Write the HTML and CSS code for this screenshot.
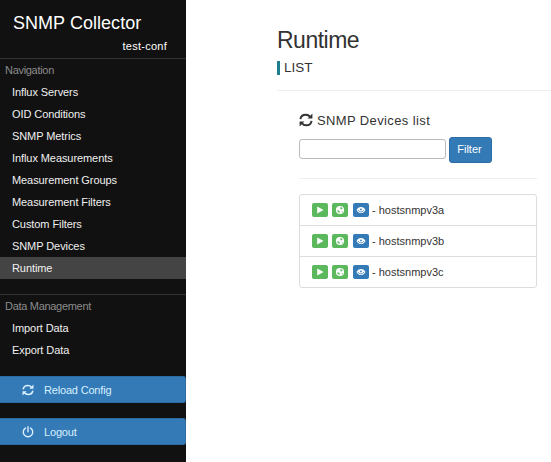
FILE: index.html
```html
<!DOCTYPE html>
<html lang="en">
<head>
<meta charset="utf-8">
<title>SNMP Collector</title>
<link rel="stylesheet" href="styles.css">
</head>
<body>
<svg class="defs" width="0" height="0" aria-hidden="true">
  <symbol id="refresh" viewBox="0 0 14 14">
    <path d="M1.4 6.2C1.8 3.2 4.2 1.7 6.8 1.7c1.8 0 3.2.7 4.2 2M12.6 7.8c-.4 3-2.8 4.5-5.4 4.5-1.8 0-3.2-.7-4.2-2" fill="none" stroke="currentColor" stroke-width="1.9"/>
    <path d="M13.4.6v5H8.6zM.6 13.4v-5h4.8z" fill="currentColor"/>
  </symbol>
  <symbol id="power" viewBox="0 0 14 14">
    <path d="M4 2.4a5.5 5.5 0 1 0 6 0M7 .8v6" fill="none" stroke="currentColor" stroke-width="1.6" stroke-linecap="round"/>
  </symbol>
  <symbol id="play" viewBox="0 0 10 10"><path d="M2.2 1.6v7L8.6 5.1z" fill="currentColor"/></symbol>
  <symbol id="globe" viewBox="0 0 10 10">
    <circle cx="5" cy="5" r="4.1" fill="currentColor"/>
    <path d="M5.2 2.2l1.8.4.5 1.2-1 .6-1.2-.8zM2 5.2l1.6.4 1.2.9-.5 1.4-1.5-.9zM6.7 6.6l1.2-.3-.7 1.4z" fill="#5cb85c"/>
  </symbol>
  <symbol id="eye" viewBox="0 0 10 10">
    <path d="M.5 5C2.2.9 7.8.9 9.5 5 7.8 9.1 2.2 9.1.5 5z" fill="currentColor"/>
    <path d="M2 4.9c1.2 2.6 4.8 2.6 6 0" fill="none" stroke="#337ab7" stroke-width=".8"/>
    <circle cx="5" cy="4.4" r=".9" fill="#337ab7"/>
  </symbol>
</svg>
<div class="app">
  <aside class="sidebar">
    <h1 class="brand">SNMP Collector</h1>
    <div class="instance">test-conf</div>
    <nav class="group">
      <div class="group-title">Navigation</div>
      <a class="item">Influx Servers</a>
      <a class="item">OID Conditions</a>
      <a class="item">SNMP Metrics</a>
      <a class="item">Influx Measurements</a>
      <a class="item">Measurement Groups</a>
      <a class="item">Measurement Filters</a>
      <a class="item">Custom Filters</a>
      <a class="item">SNMP Devices</a>
      <a class="item active">Runtime</a>
    </nav>
    <nav class="group">
      <div class="group-title">Data Management</div>
      <a class="item">Import Data</a>
      <a class="item">Export Data</a>
    </nav>
    <button class="side-btn"><svg><use href="#refresh"/></svg>Reload Config</button>
    <button class="side-btn"><svg><use href="#power"/></svg>Logout</button>
  </aside>
  <main class="content">
    <h2 class="title">Runtime</h2>
    <div class="subtitle">LIST</div>
    <section class="panel">
      <h4 class="panel-title"><svg><use href="#refresh"/></svg>SNMP Devices list</h4>
      <div class="filter"><input type="text"><button>Filter</button></div>
      <ul class="devices">
        <li><span class="tag"><svg><use href="#play"/></svg></span><span class="tag"><svg><use href="#globe"/></svg></span><span class="tag blue"><svg><use href="#eye"/></svg></span><span class="host">- hostsnmpv3a</span></li>
        <li><span class="tag"><svg><use href="#play"/></svg></span><span class="tag"><svg><use href="#globe"/></svg></span><span class="tag blue"><svg><use href="#eye"/></svg></span><span class="host">- hostsnmpv3b</span></li>
        <li><span class="tag"><svg><use href="#play"/></svg></span><span class="tag"><svg><use href="#globe"/></svg></span><span class="tag blue"><svg><use href="#eye"/></svg></span><span class="host">- hostsnmpv3c</span></li>
      </ul>
    </section>
  </main>
</div>
</body>
</html>
```
FILE: styles.css
```css
* { box-sizing: border-box; }
body {
  margin: 0;
  font: 11px/16px "Liberation Sans", Arial, sans-serif;
  color: #333;
  background: #fff;
}
.defs { display: none; }
h1, h2, h4, ul { margin: 0; padding: 0; font-weight: normal; }
button, input { font: inherit; }

.app { display: flex; height: 462px; overflow: hidden; }

.sidebar { width: 186px; flex: none; background: #111; color: #fff; }
.brand { padding: 11px 13px 0; font-size: 18px; line-height: 24px; letter-spacing: 0.04px; }
.instance { height: 23px; padding: 3px 19px 0 0; text-align: right; letter-spacing: 0.25px; }
.group { border-top: 1px solid #333; margin-bottom: 15px; }
.group-title { height: 22px; padding: 3px 5px; color: #8c8c8c; letter-spacing: -0.3px; }
.group-title:first-child { white-space: nowrap; }
.item { display: block; height: 22px; padding: 3px 12px; color: #f0f0f0; letter-spacing: -0.08px; }
.item.active { background: #444; }
.side-btn {
  display: flex;
  align-items: center;
  width: 100%;
  height: 27px;
  margin-bottom: 15px;
  padding: 0 0 0 22px;
  border: 1px solid #2e6da4;
  border-left: 0;
  border-radius: 0 3px 3px 0;
  background: #337ab7;
  color: #d8f0ff;
  letter-spacing: -0.18px;
}
.side-btn svg { width: 12px; height: 12px; margin-right: 10px; }

.content { flex: 1; padding: 27px 0 0 91px; }
.title { font-size: 23px; line-height: 26px; letter-spacing: -0.5px; }
.subtitle {
  height: 14px;
  margin-top: 8px;
  padding-left: 4px;
  border-left: 3px solid #1f7e8e;
  font-size: 13.5px;
  line-height: 13px;
}
.panel { margin-top: 15px; padding: 21px 14px 0 22px; border-top: 1px solid #eee; }
.panel-title { display: flex; align-items: center; height: 18px; font-size: 13px; letter-spacing: 0.38px; }
.panel-title svg { width: 14px; height: 14px; margin: -2px 4px 0 0; }
.filter { display: flex; align-items: flex-start; height: 49px; padding-top: 7px; border-bottom: 1px solid #eee; }
.filter input { width: 147px; height: 20px; border: 1px solid #bbb; border-radius: 3px; margin: 2px 3px 0 0; }
.filter button {
  width: 43px;
  height: 26px;
  padding: 0 2px 2px 0;
  border: 1px solid #2e6da4;
  border-radius: 3px;
  background: #337ab7;
  color: #fff;
}
.devices { margin-top: 15px; border: 1px solid #ddd; border-radius: 3px; list-style: none; }
.devices li { display: flex; align-items: center; height: 31px; padding-left: 12px; }
.devices li:first-child { height: 30px; }
.devices li + li { border-top: 1px solid #ddd; }
.tag {
  display: flex;
  align-items: center;
  justify-content: center;
  width: 16px;
  height: 14px;
  margin-right: 4px;
  border-radius: 2px;
  background: #5cb85c;
  color: #fff;
}
.tag svg { width: 10px; height: 10px; }
.tag.blue { background: #337ab7; margin: 0 3px 0 1px; }
```
